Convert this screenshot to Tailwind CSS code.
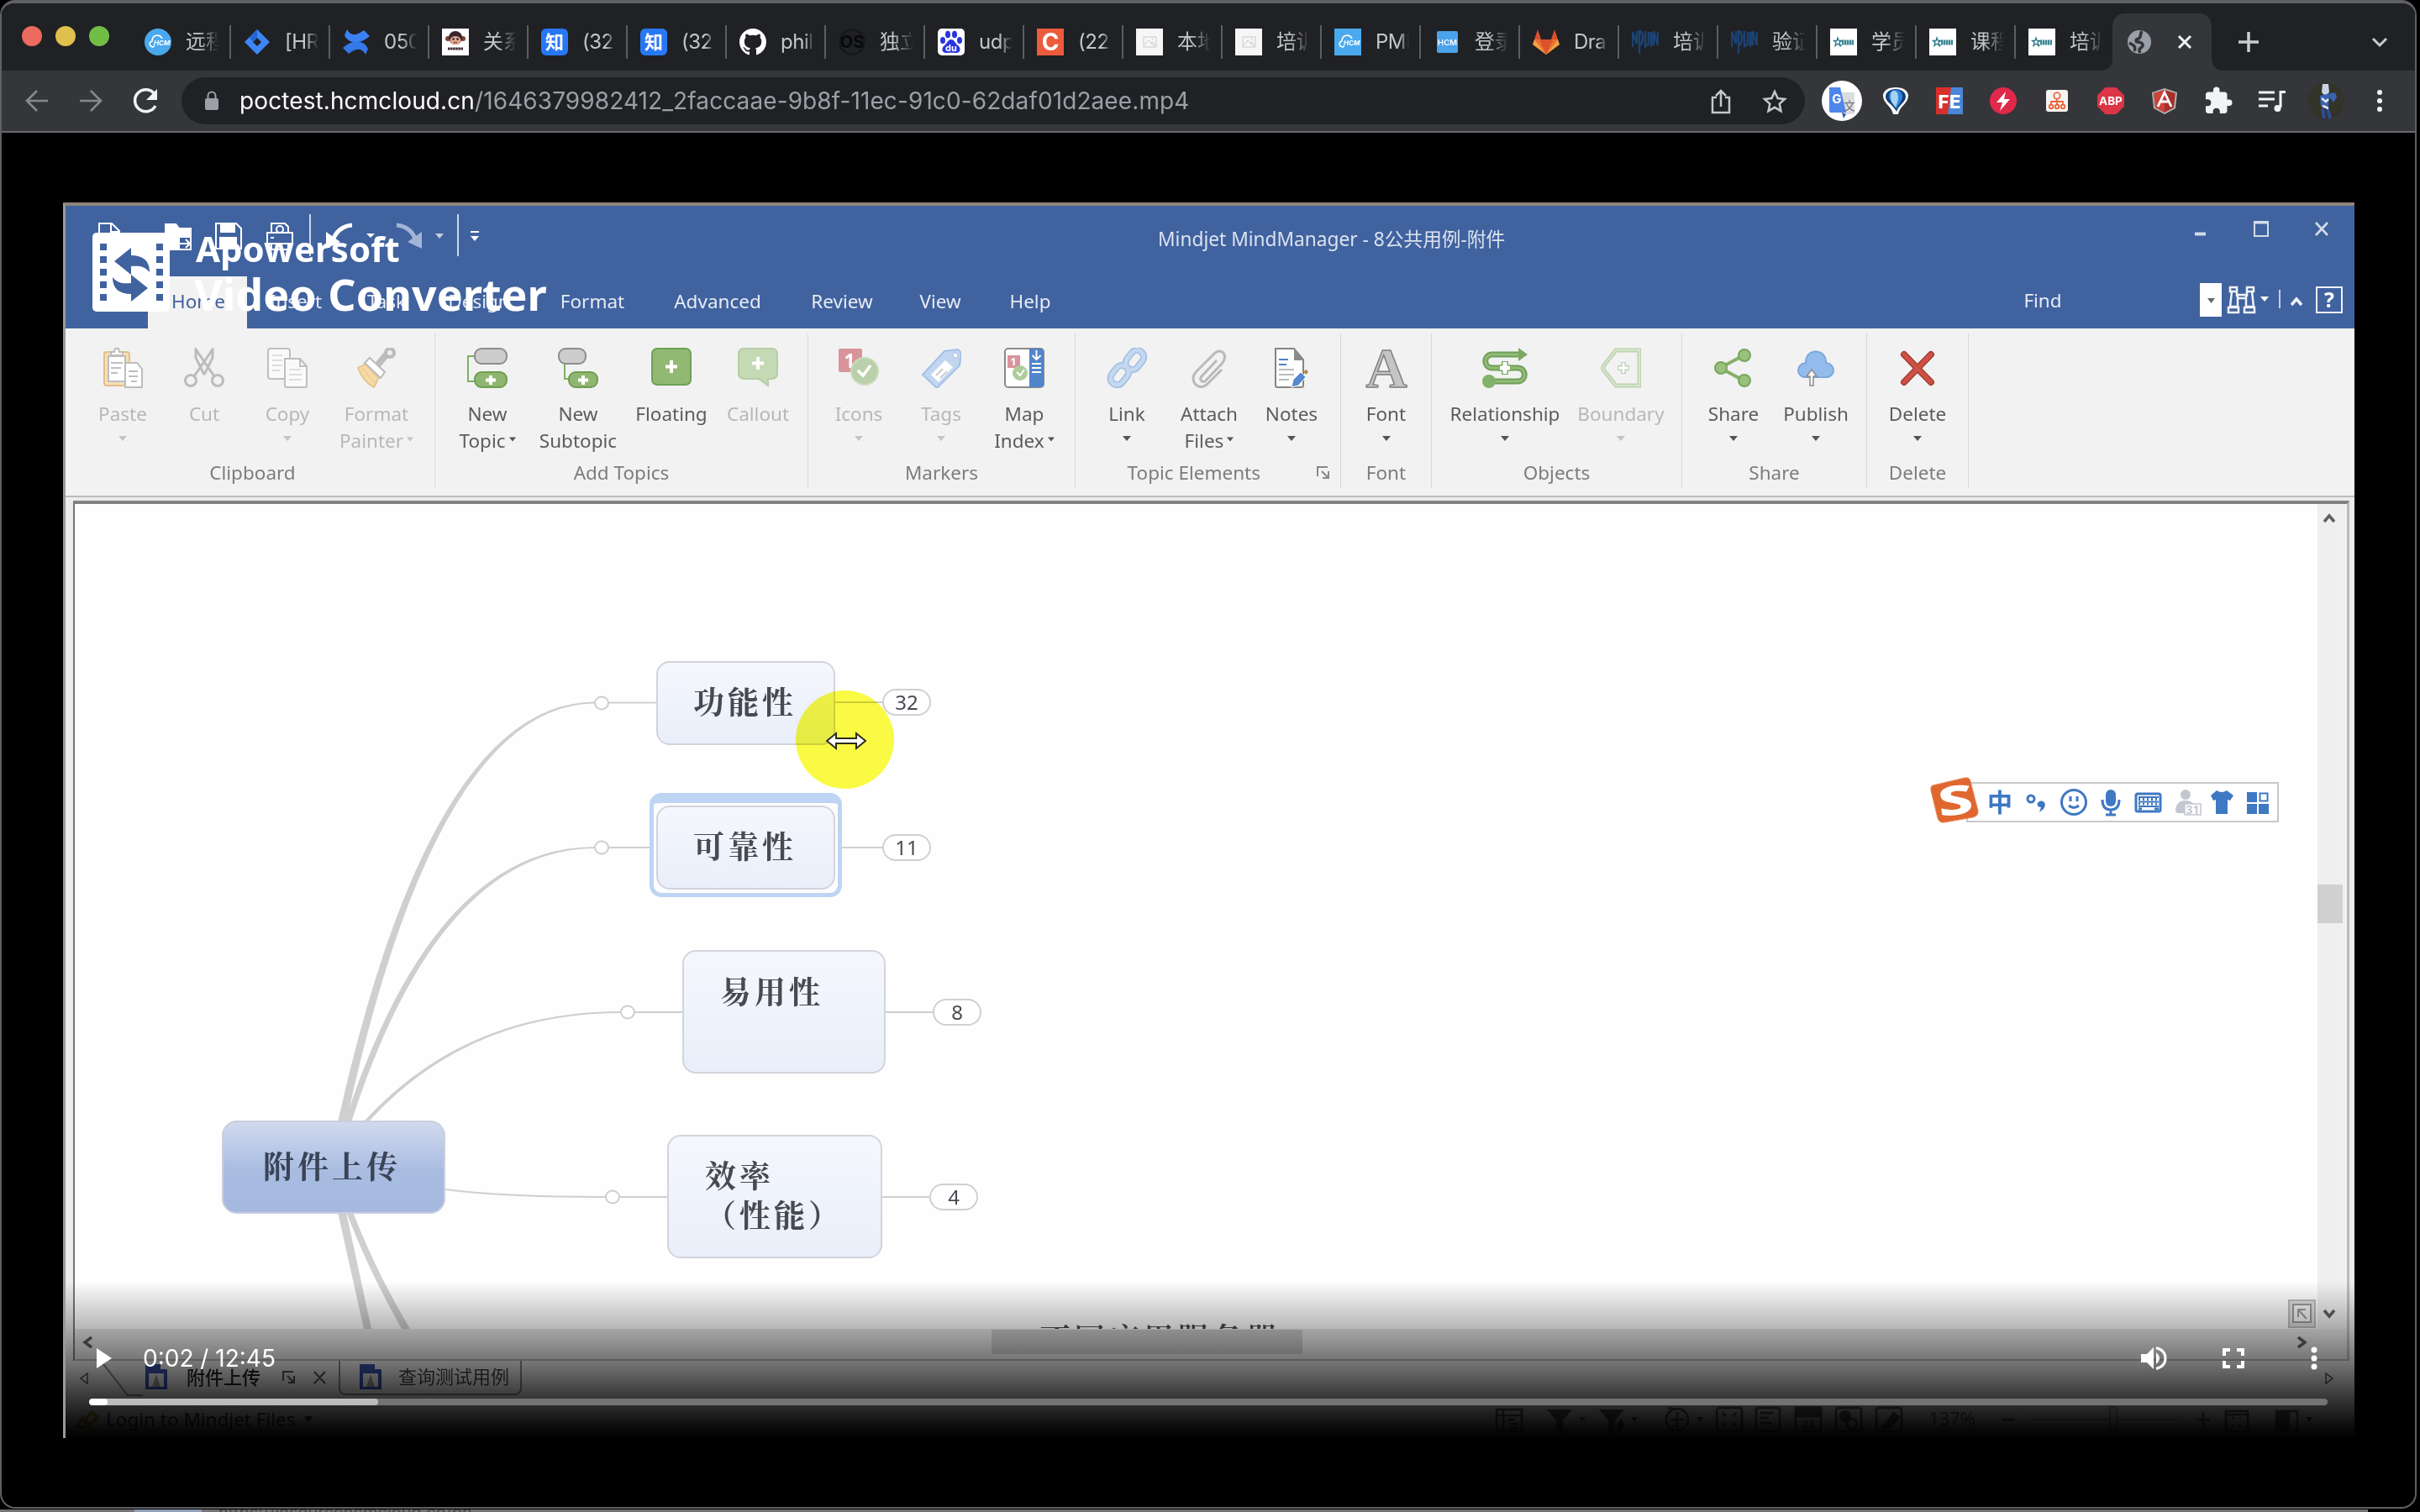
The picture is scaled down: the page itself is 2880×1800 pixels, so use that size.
<!DOCTYPE html>
<html lang="zh-CN">
<head>
<meta charset="utf-8">
<title>poctest.hcmcloud.cn</title>
<script src="https://cdn.jsdelivr.net/npm/@tailwindcss/browser@4"></script>
</head>
<body class="bg-black overflow-hidden">
<div class="relative flex h-[1800px] w-[2880px] flex-col overflow-hidden bg-black font-['Inter','Noto_Sans_CJK_SC',sans-serif]">

  <!-- Browser window -->
  <div class="flex h-[1796px] w-[2876px] flex-col overflow-hidden rounded-[18px] border-t-4 border-r-2 border-b-2 border-l-2 border-[#5f6063] bg-black">

    <!-- Tab strip -->
    <div class="flex h-20 shrink-0 bg-[#202124]">
      <div class="flex w-[155px] items-start gap-4 pt-[27px] pl-6">
        <div class="size-6 rounded-full bg-[#ec6a5e]"></div>
        <div class="size-6 rounded-full bg-[#e0c04c]"></div>
        <div class="size-6 rounded-full bg-[#71be47]"></div>
      </div>
      <div id="tabs" class="flex text-[24px] text-[#c4c7ca]">
        <div class="flex w-[118px] items-center pt-3 pl-[15px]"><svg class="size-8 shrink-0" viewBox="0 0 32 32"><circle cx="16" cy="16" r="16" fill="#4aa9ee"/><path d="M11 22c-6 0-6-6-2-7 0-8 9-9 12-3M9 22l3-1" fill="none" stroke="#fff" stroke-width="1.6"/><text x="11" y="20" font-size="8" font-weight="700" font-style="italic" fill="#fff">HCM</text></svg><span class="ml-[17px] w-10 overflow-hidden whitespace-nowrap mask-r-from-40%">远程</span><i class="ml-auto h-10 w-0.5 bg-[#5c5e61]"></i></div>
        <div class="flex w-[118px] items-center pt-3 pl-[15px]"><svg class="size-8 shrink-0" viewBox="0 0 32 32"><path d="M16 1 31 16 16 31 1 16Z" fill="#3d86f6"/><path d="M16 11l5 5-5 5-5-5Z" fill="#202124"/><path d="M16 1v10l-5 5-4-5Z" fill="#2566d4"/></svg><span class="ml-[17px] w-10 overflow-hidden tracking-[-0.5px] whitespace-nowrap mask-r-from-60%">[HR</span><i class="ml-auto h-10 w-0.5 bg-[#5c5e61]"></i></div>
        <div class="flex w-[118px] items-center pt-3 pl-[15px]"><svg class="size-8 shrink-0" viewBox="0 0 32 32"><path d="M5 1c5 9 12 7 20 1l7 7C21 19 7 19 2 8Z" fill="#3a82f3"/><path d="M27 31c-5-9-12-7-20-1l-7-7C11 13 25 13 30 24Z" fill="#3478ea"/></svg><span class="ml-[17px] w-10 overflow-hidden tracking-[-0.5px] whitespace-nowrap mask-r-from-50%">050</span><i class="ml-auto h-10 w-0.5 bg-[#5c5e61]"></i></div>
        <div class="flex w-[118px] items-center pt-3 pl-[15px]"><svg class="size-8 shrink-0" viewBox="0 0 32 32"><path fill="#fff" d="M0 0h32v32H0z"/><circle cx="7" cy="12" r="3" fill="#7c4338"/><circle cx="25" cy="12" r="3" fill="#7c4338"/><circle cx="16" cy="11" r="8" fill="#3b2430"/><ellipse cx="16" cy="14" rx="6.500" ry="5" fill="#e0a58c"/><circle cx="13.500" cy="12.500" r="1.300" fill="#222"/><circle cx="18.500" cy="12.500" r="1.300" fill="#222"/><path d="M14 16.500h4" stroke="#7c2a2a"/><path d="M7 24h18" stroke="#3b2430" stroke-width="3" stroke-dasharray="2.500 .6"/></svg><span class="ml-[17px] w-10 overflow-hidden whitespace-nowrap mask-r-from-40%">关系</span><i class="ml-auto h-10 w-0.5 bg-[#5c5e61]"></i></div>
        <div class="flex w-[118px] items-center pt-3 pl-[15px]"><b class="flex size-8 shrink-0 items-center justify-center rounded-md bg-[#2878f5] text-[22px] leading-none text-white">知</b><span class="ml-[17px] w-10 overflow-hidden tracking-[-0.5px] whitespace-nowrap mask-r-from-70%">(32</span><i class="ml-auto h-10 w-0.5 bg-[#5c5e61]"></i></div>
        <div class="flex w-[118px] items-center pt-3 pl-[15px]"><b class="flex size-8 shrink-0 items-center justify-center rounded-md bg-[#2878f5] text-[22px] leading-none text-white">知</b><span class="ml-[17px] w-10 overflow-hidden tracking-[-0.5px] whitespace-nowrap mask-r-from-70%">(32</span><i class="ml-auto h-10 w-0.5 bg-[#5c5e61]"></i></div>
        <div class="flex w-[118px] items-center pt-3 pl-[15px]"><svg class="size-8 shrink-0" viewBox="0 0 16 16" fill="#fff"><path d="M8 0C3.580 0 0 3.580 0 8c0 3.540 2.290 6.530 5.470 7.590.4.070.55-.17.55-.38 0-.19-.01-.82-.01-1.490-2.010.37-2.530-.49-2.690-.94-.09-.23-.48-.94-.82-1.130-.28-.15-.68-.52-.01-.53.63-.01 1.080.58 1.230.82.72 1.210 1.870.87 2.330.66.070-.52.28-.87.51-1.070-1.780-.2-3.640-.89-3.640-3.950 0-.87.31-1.590.82-2.150-.08-.2-.36-1.020.080-2.120 0 0 .67-.21 2.200.82a7.600 7.600 0 0 1 4 0c1.530-1.040 2.200-.82 2.200-.82.44 1.100.16 1.920.080 2.120.51.56.82 1.270.82 2.150 0 3.070-1.870 3.750-3.650 3.950.29.25.54.73.54 1.480 0 1.070-.01 1.930-.01 2.200 0 .21.15.46.55.38A8.010 8.010 0 0 0 16 8c0-4.420-3.580-8-8-8Z"/></svg><span class="ml-[17px] w-10 overflow-hidden tracking-[-0.5px] whitespace-nowrap mask-r-from-70%">phil</span><i class="ml-auto h-10 w-0.5 bg-[#5c5e61]"></i></div>
        <div class="flex w-[118px] items-center pt-3 pl-[15px]"><svg class="size-8 shrink-0" viewBox="0 0 32 32"><circle cx="16" cy="16" r="14.500" fill="none" stroke="#111214" stroke-width="2.500" stroke-dasharray="2 1"/><text x="16" y="23" font-size="20" font-weight="700" text-anchor="middle" fill="#08090a">OS</text></svg><span class="ml-[17px] w-10 overflow-hidden whitespace-nowrap mask-r-from-40%">独立</span><i class="ml-auto h-10 w-0.5 bg-[#5c5e61]"></i></div>
        <div class="flex w-[118px] items-center pt-3 pl-[15px]"><svg class="size-8 shrink-0" viewBox="0 0 32 32"><rect width="32" height="32" rx="5" fill="#fff"/><g fill="#2932e1"><ellipse cx="12" cy="7" rx="3" ry="4.300"/><ellipse cx="20" cy="7" rx="3" ry="4.300"/><ellipse cx="6" cy="14" rx="3" ry="4"/><ellipse cx="26" cy="14" rx="3" ry="4"/><path d="M16 13c4 0 5 5 8 7 5 4 2 10-3 9-3-.5-7-.5-10 0-5 1-8-5-3-9 3-2 4-7 8-7Z"/></g><text x="16" y="27" font-size="11" font-weight="700" text-anchor="middle" fill="#fff">du</text></svg><span class="ml-[17px] w-10 overflow-hidden tracking-[-0.5px] whitespace-nowrap mask-r-from-60%">udp</span><i class="ml-auto h-10 w-0.5 bg-[#5c5e61]"></i></div>
        <div class="flex w-[118px] items-center pt-3 pl-[15px]"><b class="flex size-8 shrink-0 items-center justify-center bg-[#ec5b3b] text-[28px] leading-none text-white">C</b><span class="ml-[17px] w-10 overflow-hidden tracking-[-0.5px] whitespace-nowrap mask-r-from-70%">(22</span><i class="ml-auto h-10 w-0.5 bg-[#5c5e61]"></i></div>
        <div class="flex w-[118px] items-center pt-3 pl-[15px]"><svg class="size-8 shrink-0" viewBox="0 0 32 32"><path fill="#f6f6f6" d="M0 0h32v32H0z"/><path d="M9 10h15v12H9zM10 20l5-6 7 7M17 18l3-2 3 4M19 13h2" fill="none" stroke="#c9c9c9"/></svg><span class="ml-[17px] w-10 overflow-hidden whitespace-nowrap mask-r-from-40%">本地</span><i class="ml-auto h-10 w-0.5 bg-[#5c5e61]"></i></div>
        <div class="flex w-[118px] items-center pt-3 pl-[15px]"><svg class="size-8 shrink-0" viewBox="0 0 32 32"><path fill="#f6f6f6" d="M0 0h32v32H0z"/><path d="M9 10h15v12H9zM10 20l5-6 7 7M17 18l3-2 3 4M19 13h2" fill="none" stroke="#c9c9c9"/></svg><span class="ml-[17px] w-10 overflow-hidden whitespace-nowrap mask-r-from-40%">培训</span><i class="ml-auto h-10 w-0.5 bg-[#5c5e61]"></i></div>
        <div class="flex w-[118px] items-center pt-3 pl-[15px]"><svg class="size-8 shrink-0" viewBox="0 0 32 32"><path d="M0 0h32v32H0z" fill="#4aa9ee"/><path d="M11 22c-6 0-6-6-2-7 0-8 9-9 12-3M9 22l3-1" fill="none" stroke="#fff" stroke-width="1.600"/><text x="11" y="20" font-size="8" font-weight="700" font-style="italic" fill="#fff">HCM</text></svg><span class="ml-[17px] w-10 overflow-hidden tracking-[-0.5px] whitespace-nowrap mask-r-from-70%">PMI</span><i class="ml-auto h-10 w-0.5 bg-[#5c5e61]"></i></div>
        <div class="flex w-[118px] items-center pt-3 pl-[15px]"><svg class="size-8 shrink-0" viewBox="0 0 32 32"><rect x="4" y="3" width="25" height="26" rx="2" fill="#4aa2ea"/><text x="16.500" y="20" font-size="9.500" font-weight="600" text-anchor="middle" fill="#fff">HCM</text></svg><span class="ml-[17px] w-10 overflow-hidden whitespace-nowrap mask-r-from-40%">登录</span><i class="ml-auto h-10 w-0.5 bg-[#5c5e61]"></i></div>
        <div class="flex w-[118px] items-center pt-3 pl-[15px]"><svg class="size-8 shrink-0" viewBox="0 0 32 32"><path d="M16 31 0 19 2 13h28l2 6Z" fill="#f3a145"/><path d="M16 31 6 13h20Z" fill="#d9522c"/><path d="M2 13 6 1l4 12ZM22 13l4-12 4 12Z" fill="#d9522c"/><path d="M16 31 2 13h6Z" fill="#ea7135"/><path d="M16 31 30 13h-6Z" fill="#ea7135"/></svg><span class="ml-[17px] w-10 overflow-hidden tracking-[-0.5px] whitespace-nowrap mask-r-from-70%">Draf</span><i class="ml-auto h-10 w-0.5 bg-[#5c5e61]"></i></div>
        <div class="flex w-[118px] items-center pt-3 pl-[15px]"><svg class="size-8 shrink-0" viewBox="0 0 32 32"><path d="M1 22V4l5 14V3M9 30V3c6 0 5 17 0 17M16 3v18l4-3V4M23 22V4l3 16V3l5 17V4" fill="none" stroke="#1b4272" stroke-width="2.500"/></svg><span class="ml-[17px] w-10 overflow-hidden whitespace-nowrap mask-r-from-40%">培训</span><i class="ml-auto h-10 w-0.5 bg-[#5c5e61]"></i></div>
        <div class="flex w-[118px] items-center pt-3 pl-[15px]"><svg class="size-8 shrink-0" viewBox="0 0 32 32"><path d="M1 22V4l5 14V3M9 30V3c6 0 5 17 0 17M16 3v18l4-3V4M23 22V4l3 16V3l5 17V4" fill="none" stroke="#1b4272" stroke-width="2.500"/></svg><span class="ml-[17px] w-10 overflow-hidden whitespace-nowrap mask-r-from-40%">验证</span><i class="ml-auto h-10 w-0.5 bg-[#5c5e61]"></i></div>
        <div class="flex w-[118px] items-center pt-3 pl-[15px]"><svg class="size-8 shrink-0" viewBox="0 0 32 32"><path fill="#fff" d="M0 0h32v32H0z"/><path d="m9 11 1.500 3.500H14l-3 2 1 4-3-2.500-3 2.500 1-4-2.500-2H8ZM14 20l-3-1" fill="none" stroke="#2b7a8c" stroke-width="1.300"/><path d="M14 16.500h14" stroke="#3b8794" stroke-width="6" stroke-dasharray="2.400 .6"/></svg><span class="ml-[17px] w-10 overflow-hidden whitespace-nowrap mask-r-from-40%">学员</span><i class="ml-auto h-10 w-0.5 bg-[#5c5e61]"></i></div>
        <div class="flex w-[118px] items-center pt-3 pl-[15px]"><svg class="size-8 shrink-0" viewBox="0 0 32 32"><path fill="#fff" d="M0 0h32v32H0z"/><path d="m9 11 1.500 3.500H14l-3 2 1 4-3-2.500-3 2.500 1-4-2.500-2H8ZM14 20l-3-1" fill="none" stroke="#2b7a8c" stroke-width="1.300"/><path d="M14 16.500h14" stroke="#3b8794" stroke-width="6" stroke-dasharray="2.400 .6"/></svg><span class="ml-[17px] w-10 overflow-hidden whitespace-nowrap mask-r-from-40%">课程</span><i class="ml-auto h-10 w-0.5 bg-[#5c5e61]"></i></div>
        <div class="flex w-[118px] items-center pt-3 pl-[15px]"><svg class="size-8 shrink-0" viewBox="0 0 32 32"><path fill="#fff" d="M0 0h32v32H0z"/><path d="m9 11 1.500 3.500H14l-3 2 1 4-3-2.500-3 2.500 1-4-2.500-2H8ZM14 20l-3-1" fill="none" stroke="#2b7a8c" stroke-width="1.300"/><path d="M14 16.500h14" stroke="#3b8794" stroke-width="6" stroke-dasharray="2.400 .6"/></svg><span class="ml-[17px] w-10 overflow-hidden whitespace-nowrap mask-r-from-40%">培训</span></div>
      </div>
      <!-- Active tab, new tab, tab search -->
      <svg class="h-20 w-[357px] shrink-0" viewBox="2517 4 357 80" overflow="visible">
        <path d="M2498 84c12 0 16-6 16-16V32c0-10 6-16 16-16h86c10 0 16 6 16 16v36c0 10 4 16 16 16Z" fill="#35363a"/>
        <circle cx="2546" cy="50" r="14" fill="#9aa0a6"/><path d="M2549 37c-3 5 0 7-4 9-4 1-4 4 0 4 5 1 7 4 3 7-3 1-2 4-1 6M2534 51l5 3c3 2 1 5 2 7" fill="none" stroke="#35363a" stroke-width="3.500"/>
        <path d="m2593 43 14 14m0-14-14 14" stroke="#f1f3f4" stroke-width="3"/>
        <path d="M2676 38v24m-12-12h24" stroke="#c9ccd0" stroke-width="3.500"/>
        <path d="m2824 46 8 8 8-8" fill="none" stroke="#c9ccd0" stroke-width="3"/>
      </svg>
    </div>

    <!-- Toolbar -->
    <div class="flex h-[74px] shrink-0 border-b-2 border-[#6a6a6c] bg-[#35363a]">
      <svg class="h-[72px] w-[214px] shrink-0" viewBox="2 84 214 72" fill="none">
        <path d="M57 120H33m11-12-12 12 12 12M95 120h24m-11-12 12 12-12 12" stroke="#85888c" stroke-width="2.600"/>
        <path d="M184 112a13 13 0 1 0 1 14" stroke="#f1f3f4" stroke-width="3.500"/><path d="M187 106v13h-13Z" fill="#f1f3f4"/>
      </svg>
      <div class="mt-2 flex h-14 w-[1932px] items-center rounded-full bg-[#202124] pl-[27px] text-[28px] tracking-[0.100px]">
        <svg class="mr-[24px] h-6 w-[18px]" viewBox="0 0 18 24"><rect x="1" y="9" width="16" height="14" rx="2" fill="#9aa0a6"/><path d="M4.500 9V6a4.500 4.500 0 0 1 9 0v3" fill="none" stroke="#9aa0a6" stroke-width="2"/></svg>
        <span id="url" class="font-['Inter'] whitespace-nowrap text-[#9aa0a6]"><span class="text-white">poctest.hcmcloud.cn</span>/1646379982412_2faccaae-9b8f-11ec-91c0-62daf01d2aee.mp4</span>
        <svg class="mr-5 ml-auto h-10 w-[94px]" viewBox="2034 100 94 40" fill="none" stroke="#c4c7ca" stroke-width="2.500"><path d="M2043 116h-5v18h20v-18h-5M2048 127v-19m-6 6 6-6 6 6"/><path d="m2112 109 3.600 8 8.400 1-6.300 5.600 1.800 8.600-7.500-4.400-7.500 4.400 1.800-8.600-6.300-5.600 8.400-1Z"/></svg>
      </div>
      <div class="ml-3 flex h-[72px] items-center">
        <div class="flex w-16 justify-center"><svg class="size-12" viewBox="0 0 48 48"><circle cx="24" cy="24" r="24" fill="#fff"/><path d="M22 14h17v26H24Z" fill="#dadce0"/><path d="M9 8h13l7 30H11a2 2 0 0 1-2-2Z" fill="#4f86ec"/><path d="m24 38 5 2-3 5Z" fill="#3257b5"/><text x="18" y="27" font-size="15" font-weight="700" text-anchor="middle" fill="#fff">G</text><text x="33" y="35" font-size="14" text-anchor="middle" fill="#6b7075">文</text></svg></div>
        <div class="flex w-16 justify-center"><svg class="size-8" viewBox="0 0 32 32"><path d="M16 0c9 0 15 4 15 10 0 9-10 12-12 22h-6C11 22 1 19 1 10 1 4 7 0 16 0Z" fill="#fff"/><path d="M16 2c7 0 12 4 12 9 0 7-8 9-11 18C13 20 4 18 4 11c0-5 5-9 12-9Z" fill="#123f7c"/><path d="M16 3c5 0 8 3 8 8s-5 9-7 15c-3-6-9-10-9-15s3-8 8-8Z" fill="#2f86dc"/><path d="M14 4c3 0 5 3 5 8s-2 8-3 12c-3-4-6-7-6-12s1-8 4-8Z" fill="#a6d2f6"/></svg></div>
        <div class="flex w-16 justify-center"><svg class="size-8" viewBox="0 0 32 32"><path fill="#d8302b" d="M0 0h32v32H0z"/><path fill="#4a86d8" d="M18 0h14v32H14Z"/><text x="16" y="24.500" font-size="22" font-weight="800" text-anchor="middle" fill="#fff" textLength="27">FE</text></svg></div>
        <div class="flex w-16 justify-center"><svg class="size-8" viewBox="0 0 32 32"><circle cx="16" cy="16" r="16" fill="#e0294a"/><path d="M19 5 8 18h7l-3 10 12-14h-7Z" fill="#fff"/></svg></div>
        <div class="flex w-16 justify-center"><svg class="h-[26px] w-[26px]" viewBox="0 0 28 28"><rect width="28" height="28" rx="3" fill="#f6f3f1"/><g fill="none" stroke="#ee5a2b" stroke-width="1.800"><circle cx="14" cy="7.500" r="4"/><circle cx="6.500" cy="21.500" r="2.500"/><circle cx="14" cy="21.500" r="2.500"/><circle cx="21.500" cy="21.500" r="2.500"/><path d="M14 12v7M6.500 19v-4h15v4"/></g></svg></div>
        <div class="flex w-16 justify-center"><svg class="size-8" viewBox="0 0 32 32"><path d="M9.500 0h13L32 9.500v13L22.500 32h-13L0 22.500v-13Z" fill="#dc3545"/><text x="16" y="21" font-size="13.500" font-weight="700" text-anchor="middle" fill="#fff">ABP</text></svg></div>
        <div class="flex w-16 justify-center"><svg class="size-8" viewBox="0 0 32 32"><path d="M16 1 31 6l-2 19-13 7L3 25 1 6Z" fill="#b3b3b3"/><path d="m16 3 13 4-2 17-11 6-11-6L3 7Z" fill="#a6302a"/><path d="M16 3v27L5 24 3 7Z" fill="#c9453c"/><path d="M8 23 16 6l8 17m-13-6h10" fill="none" stroke="#fff" stroke-width="2.800"/></svg></div>
        <div class="flex w-16 justify-center"><svg class="size-9" viewBox="0 0 24 24" fill="#f1f3f4"><path d="M20.500 11H19V7c0-1.100-.9-2-2-2h-4V3.500a2.500 2.500 0 0 0-5 0V5H4c-1.100 0-2 .9-2 2v3.800h1.500a2.700 2.700 0 0 1 0 5.400H2V20c0 1.100.9 2 2 2h3.800v-1.500a2.700 2.700 0 0 1 5.400 0V22H17c1.100 0 2-.9 2-2v-4h1.500a2.500 2.500 0 0 0 0-5Z"/></svg></div>
        <div class="flex w-16 justify-center"><svg class="size-8" viewBox="0 0 32 32" fill="none" stroke="#f1f3f4" stroke-width="3"><path d="M0 6h19M0 14h19M0 22h11M32 5.500h-6V24"/><circle cx="22.500" cy="25" r="4" fill="#f1f3f4" stroke="none"/></svg></div>
        <div class="flex w-16 justify-center"><svg class="size-11" viewBox="0 0 44 44"><circle cx="22" cy="22" r="22" fill="#34332a"/><path d="M18 2h7l1 10-5 4-4-4Z" fill="#c8d4e4"/><path d="m15 16 8-2 10-2 2 6-4 6-5-6-1 11h-9Z" fill="#3a62b0"/><path d="m18 31 2 12M24 31l3 12" stroke="#2c4c98" stroke-width="4"/><path d="m17 19 5 4 3-3M18 28l7 3" stroke="#dfe8f5" stroke-width="2.500" fill="none"/></svg></div>
        <div class="flex w-16 justify-center"><svg class="h-8 w-6" viewBox="0 0 24 32" fill="#f1f3f4"><circle cx="12" cy="6" r="3"/><circle cx="12" cy="16" r="3"/><circle cx="12" cy="26" r="3"/></svg></div>
      </div>
    </div>

    <!-- Video stage -->
    <div class="grow pt-[83px] pl-[73px]">
      <div class="relative flex h-[1471px] w-[2727px] flex-col overflow-hidden border-t-4 border-l-[3px] border-t-[#8f8379] border-l-[#9a9a9c] bg-[#f0f0f0] font-['Noto_Sans','Noto_Sans_CJK_SC',sans-serif]">

        <!-- Title bar -->
        <div class="flex h-[84px] shrink-0 items-start bg-[#40629f]">
          <svg class="mt-[5px] ml-[30px] h-[60px] w-[480px]" viewBox="108 250 480 60" fill="none" stroke="#fff" stroke-width="2">
            <path d="M118 297v-31h15l9 9v22M132 266v10h10"/>
            <path d="M197 297v-30h12l4 5h14v25Z"/><path d="M197 267h12l4 5h14v10h-14v15h-16Z" fill="#fff"/><path d="M213 290h12m-4-5 5 5-5 5"/>
            <path d="M257 266h24l6 6v24h-30Z"/><path d="M263 266h16v10h-16ZM262 283h19v13h-19Z" fill="#fff"/>
            <path d="M318 277h30v13h-30ZM323 277v-11h16l4 4v7M323 290v7h20v-7M322 283h4"/><circle cx="333" cy="273" r="4"/>
            <path d="M369 255v50M545 255v50" stroke-width="1.500"/>
            <path d="M419 268c-13 1-20 9-24 20" stroke-width="5"/><path d="M388 276v20l17-8Z" fill="#fff" stroke="none"/>
            <path d="M472 268c13 1 20 9 24 20" stroke="#a3b5d6" stroke-width="5"/><path d="M502 276v20l-17-8Z" fill="#a3b5d6" stroke="none"/>
            <path d="M436 278h10l-5 5Z" fill="#fff" stroke="none"/><path d="M518 278h10l-5 6Z" fill="#c3cfe4" stroke="none"/>
            <path d="M560 276h10" /><path d="M560 281h10l-5 6Z" fill="#fff" stroke="none"/>
          </svg>
          <div id="ttl" class="mt-[25px] ml-[790px] text-[22.7px] leading-[30px] whitespace-nowrap text-[#dbe2ef]">Mindjet MindManager - 8公共用例-附件</div>
          <svg class="mt-2.5 mr-[17px] ml-auto h-10 w-[180px] shrink-0" viewBox="2605 255 180 40" fill="none" stroke="#d3dbea" stroke-width="2"><path d="M2612 278.500h13" stroke-width="4"/><path d="M2683 264h16v17h-16Z"/><path d="M2682 265h18" stroke-width="3"/><path d="m2756 265 14 15m0-15-14 15" stroke-width="2.600"/></svg>
        </div>

        <!-- Menu tabs -->
        <div class="flex h-[62px] shrink-0 bg-[#40629f] pl-[98px] text-center text-[22.5px] leading-[60px] text-[#e6ebf4]">
          <div class="w-[118px] bg-[#f2f2f2] pl-0.5 text-[#40629f]">Home</div>
          <div class="w-[116px]">Insert</div><div class="w-[100px]">Task</div><div class="w-[120px]">Design</div><div class="w-[150px]">Format</div><div class="w-[148px]">Advanced</div><div class="w-[148px]">Review</div><div class="w-[86px]">View</div><div class="w-[128px]">Help</div>
          <div class="ml-auto w-[60px] leading-[57px]">Find</div>
          <svg class="mt-1 ml-[153px] h-[50px] w-[188px] shrink-0" viewBox="2614 333 188 50" fill="none" stroke="#eef2f8" stroke-width="2"><path d="M2618 337h26v40h-26Z" fill="#fff" stroke="none"/><path d="M2627 355h9l-4.500 6Z" fill="#666" stroke="none"/><path d="M2654 342h8v5h-8ZM2674 342h8v5h-8ZM2656 347l-2 18h9v-14h10v14h9l-2-18M2663 355h10M2652 366h12v6h-12ZM2671 366h12v6h-12ZM2662 347v6M2674 347v6" stroke-width="2.500"/><path d="M2690 353h10l-5 6Z" fill="#fff" stroke="none"/><path d="M2713 345v22" stroke-width="1.500"/><path d="m2727 363 6-7 6 7" stroke-width="3.500"/><path d="M2757 342h30v30h-30Z"/><text x="2772" y="366" font-size="25" font-weight="700" text-anchor="middle" fill="#fff" stroke="none">?</text></svg>
        </div>

        <!-- Ribbon -->
        <div class="flex h-[199px] shrink-0 bg-[#f2f2f2] pt-1.5 text-center text-[22.5px] leading-8 text-[#5c5c5c]">
          <section class="flex h-[184px] w-[440px] flex-col border-r border-[#d9d9d9]">
            <div class="flex h-[150px] pl-[18px] text-[#b8b8b8]">
              <div class="flex w-[100px] flex-col items-center pt-[17px]"><svg class="mb-[15px] size-12" viewBox="0 0 48 48" fill="#fff" stroke="#bdbdbd" stroke-width="2"><rect x="2" y="5" width="30" height="40" rx="3" fill="#f6dfb6" stroke="#e3c08a"/><path d="M7 10h20v30H7ZM10 9V5h4l1-4h4l1 4h4v4Z"/><path d="M10 18h14M10 24h12M10 30h8"/><path d="M27 18h14l6 7v22H27Z"/><path d="M31 28h11M31 34h11M34 40h7"/></svg>Paste<svg class="mt-2.5 h-1.5 w-2.5" viewBox="0 0 10 6"><path d="M0 0h10L5 6Z" fill="#c4c4c4"/></svg></div>
              <div class="flex w-[94px] flex-col items-center pt-[17px]"><svg class="mb-[15px] size-12" viewBox="0 0 48 48" fill="none" stroke="#bcbcbc" stroke-width="3"><circle cx="8" cy="39" r="6.500"/><circle cx="40" cy="39" r="6.500"/><path d="m12 34 22-32v10L24 32M36 34 14 2v10l10 20"/></svg>Cut</div>
              <div class="flex w-[104px] flex-col items-center pt-[17px]"><svg class="mb-[15px] size-12" viewBox="0 0 48 48" fill="#fafafa" stroke="#bfbfbf" stroke-width="2"><rect x="1" y="1" width="26" height="36" rx="3"/><path d="M6 9h12M6 15h12M6 21h12M6 27h10" stroke="#ddd"/><path d="M21 13h18l8 9v23a2 2 0 0 1-2 2H23a2 2 0 0 1-2-2ZM39 13v9h8"/><path d="M26 26h14M26 32h15M26 38h15" stroke="#ddd"/></svg>Copy<svg class="mt-2.5 h-1.5 w-2.5" viewBox="0 0 10 6"><path d="M0 0h10L5 6Z" fill="#c4c4c4"/></svg></div>
              <div class="flex w-[108px] flex-col items-center pt-[17px]"><svg class="mb-[15px] size-12" viewBox="0 0 48 48"><path d="m2 24 9-5 16 16-6 12Q8 40 2 24Z" fill="#f6d9a4" stroke="#e5c68f" stroke-width="2"/><path d="m7 24 14 17M12 21l13 15" stroke="#e5c68f"/><path d="m10 18 6-6 18 17-5 7Z" fill="#fff" stroke="#bbb" stroke-width="2"/><path d="m25 21 11-13" stroke="#bdbdbd" stroke-width="8"/><circle cx="40" cy="6" r="5" fill="#eee" stroke="#bbb" stroke-width="4"/></svg>Format<span class="flex items-center gap-1">Painter<svg class="mb-1 h-1.5 w-2" viewBox="0 0 10 6"><path d="M0 0h10L5 6Z" fill="#c4c4c4"/></svg></span></div>
            </div>
            <div class="pl-1.5 text-[#7d7d7d]">Clipboard</div>
          </section>
          <section class="flex h-[184px] w-[444px] flex-col border-r border-[#d9d9d9]">
            <div class="flex h-[150px] pl-[8px]">
              <div class="flex w-[108px] flex-col items-center pt-[17px]"><svg class="mb-[15px] size-12" viewBox="0 0 48 48" stroke-width="2"><path d="M8 10H1v30h8" fill="none" stroke="#7db163"/><rect x="9" y="1" width="38" height="18" rx="8" fill="#cdcdcd" stroke="#8d8d8d"/><rect x="9" y="29" width="38" height="18" rx="8" fill="#8fb670" stroke="#6f9e50"/><path d="M28 33v11m-6-5.500h12" stroke="#fff" stroke-width="4"/></svg>New<span class="flex items-center gap-1">Topic<svg class="mb-1 h-1.5 w-2" viewBox="0 0 10 6"><path d="M0 0h10L5 6Z" fill="#555"/></svg></span></div>
              <div class="flex w-[108px] flex-col items-center pt-[17px]"><svg class="mb-[15px] size-12" viewBox="0 0 48 48" stroke-width="2"><path d="M8 19v18h7" fill="none" stroke="#7db163"/><rect x="1" y="1" width="32" height="18" rx="8" fill="#cdcdcd" stroke="#8d8d8d"/><rect x="13" y="29" width="34" height="18" rx="8" fill="#8fb670" stroke="#6f9e50"/><path d="M30 33v11m-6-5.500h12" stroke="#fff" stroke-width="4"/></svg>New<span>Subtopic</span></div>
              <div class="flex w-[114px] flex-col items-center pt-[17px]"><svg class="mb-[15px] size-12" viewBox="0 0 48 48"><rect x="1" y="1" width="46" height="43" rx="6" fill="#92b973" stroke="#719f55" stroke-width="2"/><path d="M24 15v15m-7-7.500h14" stroke="#fff" stroke-width="4"/></svg>Floating</div>
              <div class="flex w-[92px] flex-col items-center pt-[17px] text-[#b8b8b8]"><svg class="mb-[15px] size-12" viewBox="0 0 48 48"><path d="M7 1h34a6 6 0 0 1 6 6v24a6 6 0 0 1-6 6h-5v8l-11-8H7a6 6 0 0 1-6-6V7a6 6 0 0 1 6-6Z" fill="#c5d9b5" stroke="#b6cda6" stroke-width="2"/><path d="M24 11v15m-7-7.500h14" stroke="#fff" stroke-width="4"/></svg>Callout</div>
            </div>
            <div class="text-[#7d7d7d]">Add Topics</div>
          </section>
          <section class="flex h-[184px] w-[318px] flex-col border-r border-[#d9d9d9]">
            <div class="flex h-[150px] pl-[10px]">
              <div class="flex w-[100px] flex-col items-center pt-[17px] text-[#b8b8b8]"><svg class="mb-[15px] size-12" viewBox="0 0 48 48"><rect y="1" width="28" height="28" rx="2" fill="#d9939b"/><text x="13" y="24" font-size="23" font-weight="700" text-anchor="middle" fill="#fff">1</text><circle cx="31" cy="28" r="16" fill="#b9d0aa" stroke="#c9dcbc" stroke-width="2"/><path d="m23 27 6 6 9-12" fill="none" stroke="#fff" stroke-width="3.500"/></svg>Icons<svg class="mt-2.5 h-1.5 w-2.5" viewBox="0 0 10 6"><path d="M0 0h10L5 6Z" fill="#c4c4c4"/></svg></div>
              <div class="flex w-[96px] flex-col items-center pt-[17px] text-[#b8b8b8]"><svg class="mb-[15px] size-12" viewBox="0 0 48 48"><path d="m2 32 26-28 16-2 4 4-2 15-27 27Z" fill="#c3d6f0" stroke="#a4c0e6" stroke-width="2"/><circle cx="41" cy="9" r="3" fill="#fff" stroke="#a4c0e6"/><path d="m12 32 17-17 9 8-17 18Z" fill="#fff"/><path d="m18 33 8-8m-3 11 8-8" stroke="#ccc" stroke-width="2"/></svg>Tags<svg class="mt-2.5 h-1.5 w-2.5" viewBox="0 0 10 6"><path d="M0 0h10L5 6Z" fill="#c4c4c4"/></svg></div>
              <div class="flex w-[102px] flex-col items-center pt-[17px]"><svg class="mb-[15px] size-12" viewBox="0 0 48 48"><rect x="1" y="1" width="46" height="46" rx="4" fill="#fff" stroke="#8a8a8a" stroke-width="2"/><path d="M30 1h14a3 3 0 0 1 3 3v40a3 3 0 0 1-3 3H30Z" fill="#5185cb"/><rect x="4" y="9" width="15" height="15" fill="#d9939b"/><text x="11" y="21" font-size="13" font-weight="700" text-anchor="middle" fill="#fff">1</text><circle cx="19" cy="30" r="9" fill="#aecb9c"/><path d="m15 29 4 4 5-7" fill="none" stroke="#fff" stroke-width="2"/><path d="M38.500 3v11m-5-5 5 5 5-5M33 19h11M33 24h11M33 29h11" fill="none" stroke="#fff" stroke-width="2"/></svg>Map<span class="flex items-center gap-1">Index<svg class="mb-1 h-1.5 w-2" viewBox="0 0 10 6"><path d="M0 0h10L5 6Z" fill="#555"/></svg></span></div>
            </div>
            <div class="text-[#7d7d7d]">Markers</div>
          </section>
          <section class="flex h-[184px] w-[316px] flex-col border-r border-[#d9d9d9]">
            <div class="flex h-[150px] pl-[12px]">
              <div class="flex w-[98px] flex-col items-center pt-[17px]"><svg class="mb-[15px] size-12" viewBox="0 0 48 48" fill="none"><g stroke="#9dbde3" stroke-width="8"><rect x="-8" y="-13" width="16" height="25" rx="8" transform="translate(33 15) rotate(38)"/><rect x="-8" y="-13" width="16" height="25" rx="8" transform="translate(15 33) rotate(38)"/></g><g stroke="#c4d8f0" stroke-width="5"><rect x="-8" y="-13" width="16" height="25" rx="8" transform="translate(33 15) rotate(38)"/><rect x="-8" y="-13" width="16" height="25" rx="8" transform="translate(15 33) rotate(38)"/></g></svg>Link<svg class="mt-2.5 h-1.5 w-2.5" viewBox="0 0 10 6"><path d="M0 0h10L5 6Z" fill="#555"/></svg></div>
              <div class="flex w-[98px] flex-col items-center pt-[17px]"><svg class="mb-[15px] size-12" viewBox="0 0 48 48" fill="none" stroke="#b9b9b9" stroke-width="3"><path d="m33 15-18 19c-4 5 2 8 5 5l19-20c9-10-1-20-9-12L9 28C-2 39 12 53 22 43l17-17"/></svg>Attach<span class="flex items-center gap-1">Files<svg class="mb-1 h-1.5 w-2" viewBox="0 0 10 6"><path d="M0 0h10L5 6Z" fill="#555"/></svg></span></div>
              <div class="flex w-[98px] flex-col items-center pt-[17px]"><svg class="mb-[15px] size-12" viewBox="0 0 48 48"><path d="M5 1h22l11 13v31a2 2 0 0 1-2 2H7a2 2 0 0 1-2-2Z" fill="#fff" stroke="#858585" stroke-width="2"/><path d="M27 1v14h11Z" fill="#8b8b8b"/><path d="M9 14h11M9 20h9" stroke="#4d83c8" stroke-width="2"/><path d="M9 26h18M9 32h18M9 38h12" stroke="#bbb" stroke-width="2"/><path d="m24 47 2-9 9-9 6 6-9 10Z" fill="#5588cd" stroke="#fff"/><path d="m38 28 4-2 2 3-3 3Z" fill="#b98a3e"/></svg>Notes<svg class="mt-2.5 h-1.5 w-2.5" viewBox="0 0 10 6"><path d="M0 0h10L5 6Z" fill="#555"/></svg></div>
            </div>
            <div class="flex items-center justify-end pr-3 text-[#7d7d7d]"><span class="mr-[67px]">Topic Elements</span><svg class="size-4" viewBox="0 0 16 16" fill="none" stroke="#888" stroke-width="2"><path d="M1 12V1h12M6 6l8 8m0-8v8H7"/></svg></div>
          </section>
          <section class="flex h-[184px] w-[108px] flex-col border-r border-[#d9d9d9]">
            <div class="flex h-[150px] flex-col items-center pt-[17px]"><svg class="mb-[15px] size-12" viewBox="0 0 48 48" overflow="visible"><text x="24" y="47" font-size="68" font-weight="700" font-family="Liberation Serif" text-anchor="middle" fill="#c5c5c5" stroke="#7f7f7f" stroke-width="1.500">A</text></svg>Font<svg class="mt-2.5 h-1.5 w-2.5" viewBox="0 0 10 6"><path d="M0 0h10L5 6Z" fill="#555"/></svg></div>
            <div class="text-[#7d7d7d]">Font</div>
          </section>
          <section class="flex h-[184px] w-[298px] flex-col border-r border-[#d9d9d9]">
            <div class="flex h-[150px] pl-[12px]">
              <div class="flex w-[150px] flex-col items-center pt-[17px]"><svg class="mb-[15px] h-12 w-14" viewBox="0 0 56 48" fill="none"><path d="M46 8H13c-11 0-11 16 0 16h30c11 0 11 16 0 16H12" stroke="#6f9f56" stroke-width="7"/><path d="M46 8H13c-11 0-11 16 0 16h30c11 0 11 16 0 16H12" stroke="#93bb78" stroke-width="3"/><path d="m44 0 11 8-11 8Z" fill="#7ba963"/><circle cx="9" cy="40" r="8" fill="#82b169"/><path d="M28 16v16m-7-8h14" stroke="#7ba963" stroke-width="8"/><path d="M28 17v14m-6-7h12" stroke="#fff" stroke-width="5"/></svg>Relationship<svg class="mt-2.5 h-1.5 w-2.5" viewBox="0 0 10 6"><path d="M0 0h10L5 6Z" fill="#555"/></svg></div>
              <div class="flex w-[126px] flex-col items-center pt-[17px] text-[#b8b8b8]"><svg class="mb-[15px] size-12" viewBox="0 0 48 48" fill="none"><path d="M18 3h28v42H18L3 26v-4Z" stroke="#bdd3ae" stroke-width="5"/><path d="M18 3h28v42H18L3 26v-4Z" stroke="#d8e6cd" stroke-width="2"/><path d="M27 17v14m-7-7h14" stroke="#bdd3ae" stroke-width="6"/><path d="M27 18v12m-6-6h12" stroke="#fff" stroke-width="3"/></svg>Boundary<svg class="mt-2.5 h-1.5 w-2.5" viewBox="0 0 10 6"><path d="M0 0h10L5 6Z" fill="#c4c4c4"/></svg></div>
            </div>
            <div class="text-[#7d7d7d]">Objects</div>
          </section>
          <section class="flex h-[184px] w-[220px] flex-col border-r border-[#d9d9d9]">
            <div class="flex h-[150px] pl-[12px]">
              <div class="flex w-[98px] flex-col items-center pt-[17px]"><svg class="mb-[15px] size-12" viewBox="0 0 48 48"><path d="M38 8 8 24l30 16" fill="none" stroke="#85b069" stroke-width="4"/><g fill="#98c17c" stroke="#79a65d" stroke-width="2"><circle cx="37" cy="9" r="7"/><circle cx="9" cy="24" r="7"/><circle cx="37" cy="39" r="7"/></g></svg>Share<svg class="mt-2.5 h-1.5 w-2.5" viewBox="0 0 10 6"><path d="M0 0h10L5 6Z" fill="#555"/></svg></div>
              <div class="flex w-[98px] flex-col items-center pt-[17px]"><svg class="mb-[15px] size-12" viewBox="0 0 48 48"><path d="M12 35C0 35 0 19 12 18 11 0 37 0 36 18c12 1 12 17 0 17Z" fill="#93bcec" stroke="#7ba8de" stroke-width="2"/><path d="M17 45V34h-4l6-8 6 8h-4v11Z" fill="#fff" stroke="#8b8b8b" stroke-width="1.500"/></svg>Publish<svg class="mt-2.5 h-1.5 w-2.5" viewBox="0 0 10 6"><path d="M0 0h10L5 6Z" fill="#555"/></svg></div>
            </div>
            <div class="text-[#7d7d7d]">Share</div>
          </section>
          <section class="flex h-[184px] w-[121px] flex-col border-r border-[#d9d9d9]">
            <div class="flex h-[150px] flex-col items-center pt-[17px]"><svg class="mb-[15px] size-12" viewBox="0 0 48 48" stroke-linecap="round"><path d="m8 8 32 33m0-33L8 41" stroke="#a33c33" stroke-width="8"/><path d="m8 8 32 33m0-33L8 41" stroke="#cf5145" stroke-width="5"/></svg>Delete<svg class="mt-2.5 h-1.5 w-2.5" viewBox="0 0 10 6"><path d="M0 0h10L5 6Z" fill="#555"/></svg></div>
            <div class="text-[#7d7d7d]">Delete</div>
          </section>
        </div>

        <!-- Document area -->
        <div class="flex h-[1030px] shrink-0 border-t-2 border-[#bcbcbc] bg-[#ececec] pt-1 pl-[9px]">
          <div class="flex h-[1024px] w-[2709px] flex-col border-t-4 border-r-[3px] border-b-2 border-l-2 border-t-[#828282] border-r-[#bbb] border-b-[#b5b5b5] border-l-[#777] bg-[#f1f1f1]">
            <div class="flex h-[982px]">
              <!-- Map canvas -->
              <div class="relative w-[2669px] shrink-0 overflow-hidden bg-[#fefefe] text-[#474a50]">
                <svg class="absolute inset-0 h-[982px] w-[2669px]" viewBox="89 600 2669 982" fill="none" stroke="#cfcfcf" stroke-width="2">
                  <g fill="#cfcfcf" stroke="none">
                    <path d="M402 1336Q513 836 708 835.500v2Q520 838 412 1336Z"/>
                    <path d="M410 1336Q517 1008 708 1008v2Q523 1011 418 1336Z"/>
                    <path d="M432 1336Q552 1204 739 1204v2Q556 1206 438 1336Z"/>
                    <path d="M402 1443 433 1582h9L412 1443Z"/>
                    <path d="M412 1443Q440 1515 478 1582h10Q448 1515 420 1443Z"/>
                  </g>
                  <path d="M530 1416Q600 1425 721 1425M724 836.500h58M724 1009h58M755 1205h58M737 1425h58M994 836h57M994 1009h57M1054 1205h57M1050 1425h57"/>
                  <g fill="#fff"><ellipse cx="716" cy="837" rx="8" ry="7.500"/><ellipse cx="716" cy="1009" rx="8" ry="7.500"/><ellipse cx="747" cy="1205" rx="8" ry="7.500"/><ellipse cx="729" cy="1425" rx="8" ry="7.500"/></g>
                </svg>
                <div class="absolute top-[734px] left-[175px] h-[111px] w-[266px] rounded-[18px] border-2 border-[#c9cfdc] bg-linear-to-b from-[#d0daee] via-[#a8bbe0] via-55% to-[#a5b8df] pt-[31px] pl-[47px] font-['Noto_Serif_CJK_SC','Noto_Sans_CJK_SC',serif] text-[37px] leading-10 font-bold tracking-[4px] whitespace-nowrap text-[#3a4457]">附件上传</div>
                <div class="absolute top-[187px] left-[692px] h-[100px] w-[213px] rounded-2xl border-2 border-[#d2d4dc] bg-linear-to-b from-[#f5f7fd] to-[#e9effa] pt-[25px] pl-[42px] font-['Noto_Serif_CJK_SC','Noto_Sans_CJK_SC',serif] text-[37px] leading-10 font-bold tracking-[4px] whitespace-nowrap">功能性</div>
                <div class="absolute top-[344px] left-[684px] h-[124px] w-[229px] rounded-[14px] border-[5px] border-t-[12px] border-[#bdd5f3] bg-[#fefefe]"></div>
                <div class="absolute top-[359px] left-[692px] h-[100px] w-[213px] rounded-2xl border-2 border-[#d2d4dc] bg-linear-to-b from-[#f5f7fd] to-[#e9effa] pt-[25px] pl-[42px] font-['Noto_Serif_CJK_SC','Noto_Sans_CJK_SC',serif] text-[37px] leading-10 font-bold tracking-[4px] whitespace-nowrap">可靠性</div>
                <div class="absolute top-[531px] left-[723px] h-[147px] w-[242px] rounded-2xl border-2 border-[#d2d4dc] bg-linear-to-b from-[#f5f7fd] to-[#e9effa] pt-[26px] pl-[43px] font-['Noto_Serif_CJK_SC','Noto_Sans_CJK_SC',serif] text-[37px] leading-10 font-bold tracking-[4px] whitespace-nowrap">易用性</div>
                <div class="absolute top-[751px] left-[705px] h-[147px] w-[256px] rounded-2xl border-2 border-[#d2d4dc] bg-linear-to-b from-[#f5f7fd] to-[#e9effa] pt-[22px] pl-[43px] font-['Noto_Serif_CJK_SC','Noto_Sans_CJK_SC',serif] text-[37px] leading-[47px] font-bold tracking-[4px] whitespace-nowrap">效率<br>（性能）</div>
                <div class="absolute top-[220px] left-[961px] h-8 w-[58px] rounded-full border-2 border-[#d0d0d0] bg-white text-center text-[24px] leading-[28px]">32</div>
                <div class="absolute top-[393px] left-[961px] h-8 w-[58px] rounded-full border-2 border-[#d0d0d0] bg-white text-center text-[24px] leading-[28px]">11</div>
                <div class="absolute top-[589px] left-[1021px] h-8 w-[58px] rounded-full border-2 border-[#d0d0d0] bg-white text-center text-[24px] leading-[28px]">8</div>
                <div class="absolute top-[809px] left-[1017px] h-8 w-[58px] rounded-full border-2 border-[#d0d0d0] bg-white text-center text-[24px] leading-[28px]">4</div>
                <div class="absolute top-[222px] left-[858px] size-[117px] rounded-full bg-[#fbfb45] mix-blend-multiply"></div>
                <svg class="absolute top-[270px] left-[894px] h-6 w-12" viewBox="0 0 48 24"><path d="M1 12 12 3v6h24V3l11 9-11 9v-6H12v6Z" fill="#fff" stroke="#2c2c1c" stroke-width="2"/></svg>
                <div class="absolute top-[972px] left-[1148px] font-['Noto_Serif_CJK_SC','Noto_Sans_CJK_SC',serif] text-[37px] leading-10 font-semibold tracking-[4px] whitespace-nowrap">不同应用服务器</div>

                <!-- Input method bar -->
                <div class="absolute top-[331px] left-[2251px] h-[48px] w-[372px] border-2 border-[#c8c8c8] bg-white"></div>
                <svg class="absolute top-[320px] left-[2206px] h-[64px] w-[420px]" viewBox="2295 920 420 64" fill="none" stroke="#3f78c3" stroke-width="3">
                  <path d="m2300 935 38-9q6-1 7 4l9 35q1 6-6 8l-34 6q-6 1-8-5l-8-33q-1-5 2-6Z" fill="#e0672f" stroke="#e98b5c" stroke-width="1"/>
                  <text x="2306" y="970" font-size="48" font-weight="800" fill="#fff" stroke="none" textLength="42" lengthAdjust="spacingAndGlyphs" transform="rotate(-6 2327 952)" font-family="Noto Sans">S</text>
                  <text x="2380" y="966" font-size="30" font-weight="700" text-anchor="middle" fill="#3f78c3" stroke="none">中</text>
                  <circle cx="2417" cy="951" r="4"/><path d="M2427 954c6-2 9 4 5 9l-5 4 2-6c-5 0-6-5-2-7Z" fill="#3f78c3" stroke="none"/>
                  <circle cx="2468" cy="955" r="14.500"/><path d="M2464 948v6m8-6v6M2462 959q6 5 12 0"/>
                  <rect x="2506" y="940" width="12" height="20" rx="6" fill="#3f78c3" stroke="none"/><path d="M2502 952q0 12 10 12t10-12M2512 964v6m-6 0h12"/>
                  <rect x="2542" y="945" width="29" height="21" rx="2"/><path d="M2545 951.500h24M2545 957h24" stroke-dasharray="2 3"/><path d="M2545 949h24M2545 954.500h24M2545 960h24" stroke-width="2"/><path d="M2545 963h4m15 0h5"/>
                  <g fill="#c3c7d0" stroke="none"><circle cx="2601" cy="946" r="6"/><path d="M2589 966q0-13 12-13 7 0 10 5v10h-20Z"/></g><rect x="2600" y="957" width="19" height="13" fill="#fff" stroke="#c3c7d0" stroke-width="1.500"/><text x="2609.500" y="969" font-size="14" font-weight="700" text-anchor="middle" fill="#c3c7d0" stroke="none">31</text>
                  <path d="m2631 947 7-6q6 4 12 0l8 6-4 6-3-1v17h-14v-17l-3 1Z" fill="#3f78c3" stroke="none"/>
                  <path d="M2674 943h12v12h-12ZM2674 957h12v12h-12ZM2688 957h12v12h-12Z" fill="#3f78c3" stroke="none"/><path d="M2689.500 944.500h9v9h-9Z" stroke-width="2"/>
                </svg>
                <svg class="absolute top-[947px] left-[2634px] size-[34px]" viewBox="0 0 34 34" fill="none" stroke="#9a9a9a" stroke-width="2"><path d="M1 1h31v32H1Z" fill="#ddd" stroke="#bbb"/><path d="M6 6h21v21H6ZM12 21V12h9M12 12l10 11" fill="#f4f4f4"/></svg>
              </div>
              <!-- Vertical scrollbar -->
              <div class="flex w-[30px] flex-col items-center bg-[#efefef]">
                <svg class="mt-[11px] mr-0.5 h-3 w-4" viewBox="0 0 16 12"><path d="m2 10 6-7 6 7" fill="none" stroke="#606060" stroke-width="3.500"/></svg>
                <div class="mt-[430px] h-[46px] w-full bg-[#d0d0d0]"></div>
                <svg class="mt-[459px] mr-0.5 h-3 w-4" viewBox="0 0 16 12"><path d="m2 2 6 7 6-7" fill="none" stroke="#606060" stroke-width="3.500"/></svg>
              </div>
            </div>
            <!-- Horizontal scrollbar -->
            <div class="flex h-9 items-center bg-[#e8e8e8] pl-2">
              <svg class="mb-1 h-4 w-4" viewBox="0 0 16 16"><path d="m12 2-8 6 8 6" fill="none" stroke="#606060" stroke-width="3.500"/></svg>
              <div class="mb-1.5 ml-[1067px] h-[29px] w-[370px] bg-[#cacaca]"></div>
              <svg class="mb-1 ml-[1181px] h-4 w-4" viewBox="0 0 16 16"><path d="m4 2 8 6-8 6" fill="none" stroke="#606060" stroke-width="3.500"/></svg>
            </div>
          </div>
        </div>

        <!-- Document tabs -->
        <div class="flex h-[42px] shrink-0 items-center pl-4 text-[22px] text-[#444]">
          <svg class="h-4 w-3" viewBox="0 0 12 16"><path d="M10 2v12L2 8Z" fill="none" stroke="#555" stroke-width="1.500"/></svg>
          <div class="ml-3.5 flex h-full w-[283px] items-center">
            <svg class="h-[42px] w-[50px] shrink-0" viewBox="0 0 50 42" fill="none" stroke="#8a8a8a" stroke-width="2"><path d="M0 0 32 41h18"/></svg>
            <svg class="mb-1 ml-0.5 h-8 w-7 shrink-0" viewBox="0 0 28 32"><path d="M1 1h18v6h8v24H1Z" fill="#3a51b0"/><path d="M5 12h18v16H5Z" fill="#eee"/><path d="m9 28 5-15 5 15Z" fill="#999"/><path d="M19 0h9v9Z" fill="#eee"/></svg>
            <b class="mb-1 ml-[22px] font-medium whitespace-nowrap text-[#222]">附件上传</b>
            <svg class="mb-0.5 ml-[26px] h-4 w-16 shrink-0" viewBox="0 0 64 16" fill="none" stroke="#555" stroke-width="2"><path d="M1 12V1h12M6 6l8 8m0-8v8H7M38 1l13 14m0-14L38 15"/></svg>
          </div>
          <div class="-mt-px flex h-[41px] w-[218px] items-center rounded-b-lg border-2 border-t-0 border-[#8a8a8a] pb-0.5 pl-[22px]">
            <svg class="h-8 w-7" viewBox="0 0 28 32"><path d="M1 1h18v6h8v24H1Z" fill="#3a51b0"/><path d="M5 12h18v16H5Z" fill="#eee"/><path d="m9 28 5-15 5 15Z" fill="#999"/><path d="M19 0h9v9Z" fill="#eee"/></svg>
            <span class="ml-[19px] whitespace-nowrap">查询测试用例</span>
          </div>
          <svg class="mr-6 ml-auto h-4 w-3" viewBox="0 0 12 16"><path d="M2 2v12l8-6Z" fill="none" stroke="#555" stroke-width="1.500"/></svg>
        </div>

        <!-- Status bar -->
        <div class="flex h-[50px] shrink-0 items-center pt-1.5 pl-2.5 text-[22.500px] text-[#333]">
          <svg class="h-6 w-8" viewBox="0 0 32 24" fill="none" stroke="#b59a20" stroke-width="4"><path d="m3 20 8-10 6 6-6 6Zm9-6 9-11 7 6-9 9Z"/></svg>
          <span class="ml-1.5 whitespace-nowrap">Login to Mindjet Files</span>
          <svg class="ml-2.5 h-2 w-2.5" viewBox="0 0 10 8"><path d="M0 0h10L5 7Z" fill="#444"/></svg>
          <svg class="mr-3 ml-auto h-10 w-[1020px] opacity-75" viewBox="1770 1672 1020 40" fill="none" stroke="#333" stroke-width="2.500">
            <path d="M1781 1680h30v26h-30ZM1781 1687h30M1789 1680v26M1794 1692h9M1797 1697h9M1797 1702h9"/>
            <g fill="#333" stroke="none"><path d="M1841 1680h30l-11 13v17l-8-5v-12ZM1903 1680h30l-11 13v17l-8-5v-12ZM1879 1689h8l-4 6ZM1941 1689h8l-4 6ZM2019 1689h8l-4 6Z"/><path d="m1924 1698 6-8 3 10-7 8Z"/></g>
            <circle cx="1996" cy="1692" r="13"/><path d="M1996 1683v18m-8-9h16M1985 1678l10 2"/>
            <rect x="2043" y="1678" width="30" height="28" rx="3"/><path d="m2050 1684 4 4m8 0 4-4m-16 16 4-4m8 0 4 4"/>
            <rect x="2090" y="1678" width="28" height="28" rx="3"/><path d="M2095 1684h16m-16 6h10m-10 6h14"/>
            <rect x="2137" y="1678" width="30" height="28" rx="2"/><path d="M2137 1678h30v10h-30Z" fill="#333"/>
            <text x="2152" y="1703" font-size="14" font-weight="700" text-anchor="middle" fill="#333" stroke="none">24</text>
            <rect x="2185" y="1678" width="30" height="28" rx="3"/><circle cx="2196" cy="1688" r="6" fill="#333"/><circle cx="2204" cy="1697" r="6"/>
            <rect x="2233" y="1678" width="30" height="28" rx="3"/><path d="m2240 1702 14-18 6 5-10 12Z" fill="#333"/>
            <text x="2323" y="1699" font-size="22" text-anchor="middle" fill="#333" stroke="none" textLength="55" lengthAdjust="spacingAndGlyphs">137%</text>
            <path d="M2382 1692h16M2614 1692h16m-8-9v18"/><path d="M2418 1692h174" stroke-width="1.500" stroke="#777"/><rect x="2511" y="1678" width="8" height="28" fill="#eee" stroke="#777" stroke-width="1.500"/>
            <path d="M2649 1682h26v24h-26Zm8 7 2 2m8-2-2 2m-8 9 2-2m8 2-2-2M2649 1682h26v4h-26Z"/><path d="M2709 1682h15v24h-15Z" fill="#333"/><path d="M2724 1682h10v24h-10"/><path d="M2744 1689h8l-4 6Z" fill="#333" stroke="none"/>
          </svg>
        </div>

        <!-- Converter watermark -->
        <div class="absolute top-[32px] left-[32px] flex text-white">
          <svg class="h-[94px] w-[92px]" viewBox="0 0 92 94"><rect width="92" height="94" rx="5" fill="#fff"/><path d="M13 13v70M80 13v70" stroke="#40629f" stroke-width="8" stroke-dasharray="8 7"/><path d="M26 34 46 18v9c14 0 22 6 22 20-6-7-12-8-22-7v10Z" fill="#40629f"/><path d="M66 66 46 82v-9c-14 0-22-6-22-20 6 7 12 8 22 7V50Z" fill="#40629f"/></svg>
        </div>
        <div id="wm" class="absolute top-[23px] left-[155px] font-['Noto_Sans'] font-bold whitespace-nowrap text-white">
          <div class="h-[58px] text-[42px] leading-[56px]"><span class="inline-block">Apowersoft</span></div>
          <div class="-ml-0.5 text-[52px] leading-[56px] -mt-1"><span class="inline-block">Video Converter</span></div>
        </div>

        <!-- Player control scrim -->
        <div class="absolute bottom-0 -left-[3px] h-[187px] w-[2727px] bg-[linear-gradient(to_bottom,rgba(0,0,0,0)_0%,rgba(0,0,0,0.27)_29%,rgba(0,0,0,0.47)_48%,rgba(0,0,0,0.75)_72%,rgba(0,0,0,0.83)_80%,rgba(0,0,0,0.96)_94%,#000_100%)]"></div>
      </div>
    </div>
  </div>

  <!-- Player controls -->
  <div class="absolute top-[1590px] left-[106px] flex w-[2664px] flex-col">
    <div class="flex h-[54px] items-center text-[28px] text-white">
      <svg class="ml-[9px] h-6 w-[18px]" viewBox="0 0 18 24"><path d="M0 0v24l18-12Z" fill="#fff"/></svg>
      <span id="time" class="ml-[37px] font-['Inter'] whitespace-nowrap">0:02 / 12:45</span>
      <svg class="ml-auto h-8 w-8" viewBox="0 0 32 32" fill="#fff"><path d="M1 11v10h7l8 8V3l-8 8Z"/><path d="M19 9q8 7 0 14Z"/><path d="M19 3.500q11 3 11 12.500t-11 12.500" fill="none" stroke="#fff" stroke-width="3"/></svg>
      <svg class="ml-[66px] h-6 w-[26px]" viewBox="0 0 26 24" fill="none" stroke="#fff" stroke-width="4"><path d="M2 9V2h7M17 2h7v7M24 15v7h-7M9 22H2v-7"/></svg>
      <svg class="mr-[12px] ml-[79px] h-7 w-2" viewBox="0 0 8 28" fill="#fff"><circle cx="4" cy="4" r="3.500"/><circle cx="4" cy="14" r="3.500"/><circle cx="4" cy="24" r="3.500"/></svg>
    </div>
    <div class="mt-[21px] h-2 overflow-hidden rounded-full bg-[#737373]"><div class="h-full w-[344px] rounded-full bg-[#bcbcbc]"><div class="h-full w-[22px] rounded-full bg-white"></div></div></div>
  </div>

  <!-- Edge of the window behind -->
  <div class="mt-px flex h-[3px] w-[2818px] overflow-hidden bg-[#747474] pl-40">
    <div class="h-full w-20 bg-[#8fa0b4]"></div>
    <div class="ml-5 text-[20px] leading-[6px] whitespace-nowrap text-[#444]">https://insourcehcmcloud.cn/on</div>
  </div>
</div>
</body>
</html>
